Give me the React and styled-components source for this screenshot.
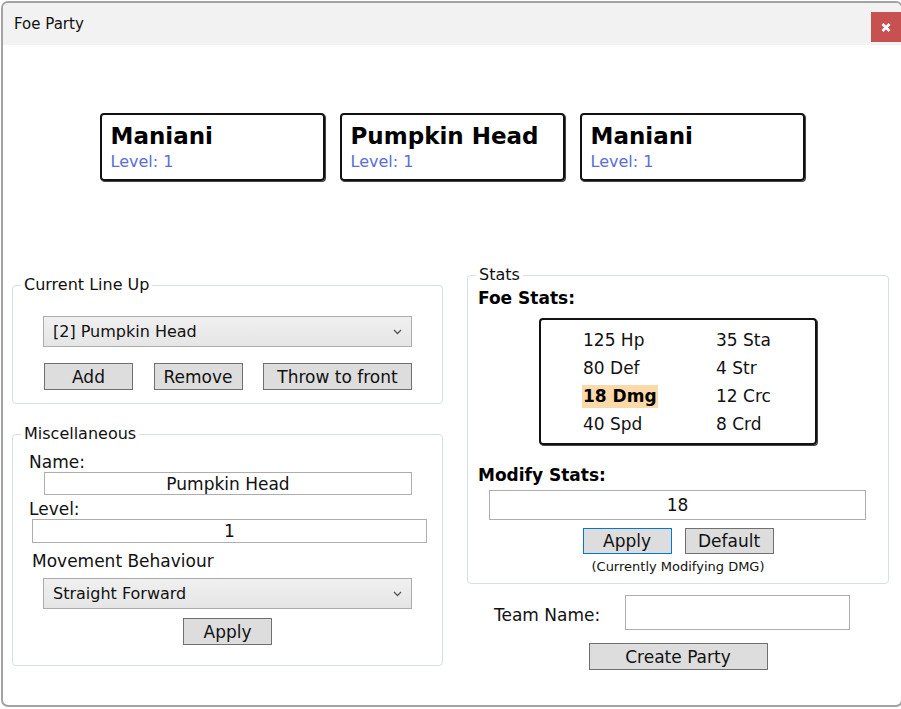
import styled, { createGlobalStyle } from "styled-components";

const GlobalStyle = createGlobalStyle`
  html, body {
    margin: 0;
    padding: 0;
    background: #ffffff;
    overflow: hidden;
  }
  body {
    font-family: "DejaVu Sans", "Liberation Sans", sans-serif;
    color: #111;
  }
`;

const party = [
  { name: "Maniani", level: 1 },
  { name: "Pumpkin Head", level: 1 },
  { name: "Maniani", level: 1 },
];

const stats = [
  ["125 Hp", "35 Sta"],
  ["80 Def", "4 Str"],
  ["18 Dmg", "12 Crc"],
  ["40 Spd", "8 Crd"],
];

const Chevron = () => (
  <svg width="9" height="6" viewBox="0 0 9 6">
    <path d="M1 1 L4.5 4.5 L8 1" fill="none" stroke="#555" strokeWidth="1.3" />
  </svg>
);

const App = () => {
  return (
    <>
      <GlobalStyle />
      <Window>
        <TitleBar>
          <Title>Foe Party</Title>
          <CloseButton>
            <svg width="10" height="9" viewBox="0 0 10 9">
              <path d="M1.5 1 L8.5 8 M8.5 1 L1.5 8" stroke="#fff" strokeWidth="2.6" />
            </svg>
          </CloseButton>
        </TitleBar>

        <CardRow>
          {party.map((foe, i) => (
            <FoeCard key={i}>
              <FoeName>{foe.name}</FoeName>
              <FoeLevel>Level: {foe.level}</FoeLevel>
            </FoeCard>
          ))}
        </CardRow>

        <Columns>
          <LeftColumn>
            <Group>
              <Legend>Current Line Up</Legend>
              <LineUpBody>
                <Combo>
                  <span>[2] Pumpkin Head</span>
                  <Chevron />
                </Combo>
                <ButtonRow>
                  <Button $w={89}>Add</Button>
                  <Button $w={89}>Remove</Button>
                  <Button $w={149}>Throw to front</Button>
                </ButtonRow>
              </LineUpBody>
            </Group>

            <Group $gap={21}>
              <Legend>Miscellaneous</Legend>
              <MiscBody>
                <FieldLabel $indent={16}>Name:</FieldLabel>
                <TextBox $left={31} $w={368} $h={23}>Pumpkin Head</TextBox>
                <FieldLabel $indent={16} $top={4}>Level:</FieldLabel>
                <TextBox $left={19} $w={395} $h={24}>1</TextBox>
                <FieldLabel $indent={19} $top={8}>Movement Behaviour</FieldLabel>
                <MoveCombo>
                  <span>Straight Forward</span>
                  <Chevron />
                </MoveCombo>
                <CenterRow $top={9}>
                  <Button $w={89}>Apply</Button>
                </CenterRow>
              </MiscBody>
            </Group>
          </LeftColumn>

          <RightColumn>
            <Group>
              <Legend>Stats</Legend>
              <StatsBody>
                <Heading $top={1}>Foe Stats:</Heading>
                <StatBox>
                  {stats.flat().map((s) => (
                    <StatCell key={s} $active={s === "18 Dmg"}>
                      {s}
                    </StatCell>
                  ))}
                </StatBox>
                <Heading $top={19}>Modify Stats:</Heading>
                <TextBox $left={21} $w={377} $h={30} $top={4}>
                  18
                </TextBox>
                <CenterRow $top={8} $gap={13}>
                  <Button $w={89} $h={26} $focused>
                    Apply
                  </Button>
                  <Button $w={89} $h={26}>
                    Default
                  </Button>
                </CenterRow>
                <Caption>(Currently Modifying DMG)</Caption>
              </StatsBody>
            </Group>

            <TeamRow>
              <TeamLabel>Team Name:</TeamLabel>
              <TeamInput />
            </TeamRow>
            <CenterRow $top={13}>
              <Button $w={179}>Create Party</Button>
            </CenterRow>
          </RightColumn>
        </Columns>
      </Window>
    </>
  );
};

export default App;

const Window = styled.div`
  margin: 1px 0 0 1px;
  width: 902px;
  height: 706px;
  box-sizing: border-box;
  border: 2px solid #a3a3a3;
  border-radius: 7px;
  background: #fff;
  overflow: hidden;
  display: flex;
  flex-direction: column;
`;

const TitleBar = styled.div`
  height: 42px;
  flex-shrink: 0;
  background: #f2f2f2;
  display: flex;
  justify-content: space-between;
  align-items: flex-start;
`;

const Title = styled.div`
  padding-left: 11px;
  font-size: 15px;
  line-height: 42px;
`;

const CloseButton = styled.div`
  margin-top: 9px;
  width: 30px;
  height: 30px;
  background: #c75050;
  display: flex;
  align-items: center;
  justify-content: center;
`;

const CardRow = styled.div`
  margin-top: 68px;
  display: flex;
  justify-content: center;
  gap: 15px;
`;

const FoeCard = styled.div`
  width: 225px;
  height: 68px;
  box-sizing: border-box;
  border: 2px solid #111;
  border-radius: 4px;
  box-shadow: 1px 1px 0 #444;
  padding: 7px 9px 0;
`;

const FoeName = styled.div`
  font-size: 23px;
  font-weight: bold;
  line-height: 28px;
  color: #000;
`;

const FoeLevel = styled.div`
  font-size: 16px;
  line-height: 23px;
  color: #5a6edb;
`;

const Columns = styled.div`
  margin-top: 85px;
  padding: 0 12px 0 9px;
  display: grid;
  grid-template-columns: 431px 422px;
  column-gap: 24px;
  align-items: start;
`;

const LeftColumn = styled.div`
  padding-top: 10px;
`;

const RightColumn = styled.div``;

const Group = styled.fieldset`
  margin: ${(p) => p.$gap || 0}px 0 0;
  padding: 0;
  min-width: 0;
  border: 1px solid #d5dfe5;
  border-radius: 4px;
`;

const Legend = styled.legend`
  margin-left: 8px;
  padding: 0 3px;
  font-size: 16px;
  line-height: 18px;
  color: #111;
`;

const LineUpBody = styled.div`
  padding: 22px 30px 13px 30px;
`;

const Combo = styled.div`
  height: 31px;
  box-sizing: border-box;
  border: 1px solid #acacac;
  background: linear-gradient(#f0f0f0, #e5e5e5);
  display: flex;
  align-items: center;
  justify-content: space-between;
  padding: 0 9px 0 9px;
  font-size: 16px;
  color: #111;
`;

const MoveCombo = styled(Combo)`
  margin: 7px 30px 0 30px;
`;

const ButtonRow = styled.div`
  margin-top: 16px;
  padding-left: 1px;
  display: flex;
  justify-content: space-between;
`;

const Button = styled.button`
  width: ${(p) => p.$w}px;
  height: ${(p) => p.$h || 27}px;
  box-sizing: border-box;
  padding: 0;
  border: 1px solid ${(p) => (p.$focused ? "#0078d7" : "#707070")};
  background: #dddddd;
  font-family: inherit;
  font-size: 17px;
  color: #111;
`;

const CenterRow = styled.div`
  margin-top: ${(p) => p.$top || 0}px;
  display: flex;
  justify-content: center;
  gap: ${(p) => p.$gap || 0}px;
`;

const MiscBody = styled.div`
  padding: 9px 0 20px;
`;

const FieldLabel = styled.div`
  margin: ${(p) => p.$top || 0}px 0 0 ${(p) => p.$indent}px;
  font-size: 17px;
  line-height: 20px;
`;

const TextBox = styled.div`
  margin: ${(p) => p.$top || 0}px 0 0 ${(p) => p.$left}px;
  width: ${(p) => p.$w}px;
  height: ${(p) => p.$h}px;
  box-sizing: border-box;
  border: 1px solid #adadad;
  background: #fff;
  display: flex;
  align-items: center;
  justify-content: center;
  font-size: 17px;
`;

const StatsBody = styled.div`
  padding: 2px 0 8px;
`;

const Heading = styled.div`
  margin: ${(p) => p.$top || 0}px 0 0 10px;
  font-size: 17px;
  font-weight: bold;
  line-height: 22px;
  color: #000;
`;

const StatBox = styled.div`
  margin: 9px auto 0;
  width: 278px;
  height: 127px;
  box-sizing: border-box;
  border: 2px solid #111;
  border-radius: 4px;
  box-shadow: 1px 1px 0 #444;
  padding: 6px 0 0 41px;
  display: grid;
  grid-template-columns: 133px auto;
  grid-auto-rows: 28px;
  align-items: center;
  justify-items: start;
`;

const StatCell = styled.span`
  padding: 0 1px;
  font-size: 17px;
  line-height: 23px;
  font-weight: ${(p) => (p.$active ? "bold" : "normal")};
  background: ${(p) => (p.$active ? "#fcd9a8" : "transparent")};
  color: ${(p) => (p.$active ? "#000" : "#111")};
`;

const Caption = styled.div`
  margin-top: 5px;
  text-align: center;
  font-size: 13px;
  line-height: 16px;
`;

const TeamRow = styled.div`
  margin-top: 11px;
  padding-left: 27px;
  display: grid;
  grid-template-columns: 131px 225px;
  align-items: center;
  font-size: 17px;
`;

const TeamLabel = styled.span`
  padding-top: 5px;
`;

const TeamInput = styled.div`
  height: 35px;
  box-sizing: border-box;
  border: 1px solid #adadad;
  background: #fff;
`;
